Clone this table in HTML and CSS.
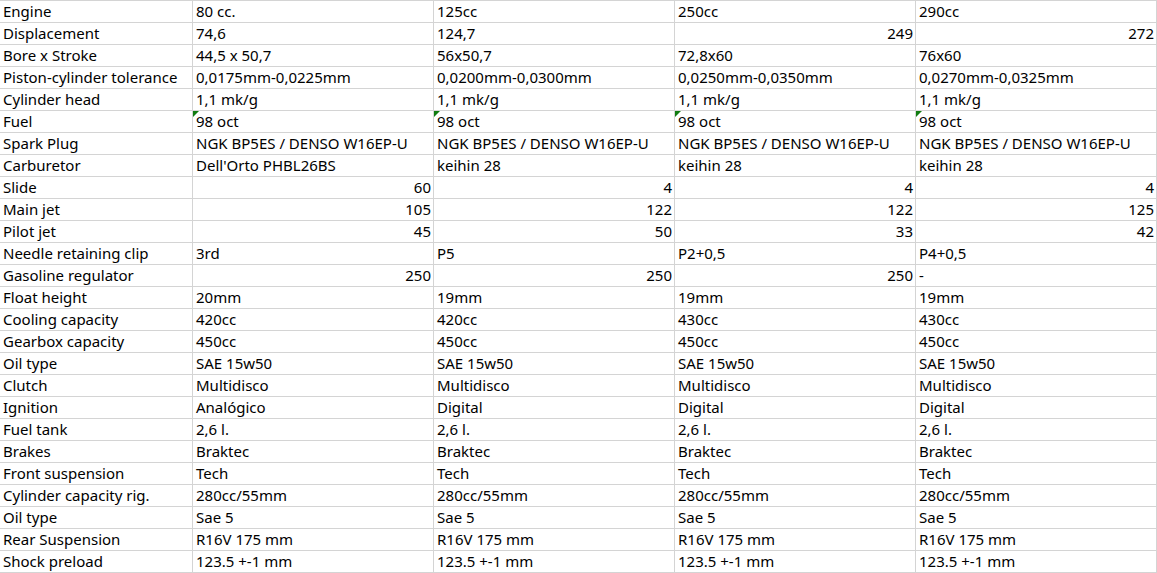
FILE: index.html
```html
<!DOCTYPE html>
<html>
<head>
<meta charset="utf-8">
<link rel="stylesheet" href="styles.css">
</head>
<body>
<table class="sheet">
<colgroup><col class="c-label"><col class="c-val"><col class="c-val"><col class="c-val"><col class="c-val"></colgroup>
<tbody>
<tr><td>Engine</td><td>80 cc.</td><td>125cc</td><td>250cc</td><td>290cc</td></tr>
<tr><td>Displacement</td><td>74,6</td><td>124,7</td><td class="num">249</td><td class="num">272</td></tr>
<tr><td>Bore x Stroke</td><td>44,5 x 50,7</td><td>56x50,7</td><td>72,8x60</td><td>76x60</td></tr>
<tr><td>Piston-cylinder tolerance</td><td>0,0175mm-0,0225mm</td><td>0,0200mm-0,0300mm</td><td>0,0250mm-0,0350mm</td><td>0,0270mm-0,0325mm</td></tr>
<tr><td>Cylinder head</td><td>1,1 mk/g</td><td>1,1 mk/g</td><td>1,1 mk/g</td><td>1,1 mk/g</td></tr>
<tr><td>Fuel</td><td class="flag">98 oct</td><td class="flag">98 oct</td><td class="flag">98 oct</td><td class="flag">98 oct</td></tr>
<tr><td>Spark Plug</td><td>NGK BP5ES / DENSO W16EP-U</td><td>NGK BP5ES / DENSO W16EP-U</td><td>NGK BP5ES / DENSO W16EP-U</td><td>NGK BP5ES / DENSO W16EP-U</td></tr>
<tr><td>Carburetor</td><td>Dell'Orto PHBL26BS</td><td>keihin 28</td><td>keihin 28</td><td>keihin 28</td></tr>
<tr><td>Slide</td><td class="num">60</td><td class="num">4</td><td class="num">4</td><td class="num">4</td></tr>
<tr><td>Main jet</td><td class="num">105</td><td class="num">122</td><td class="num">122</td><td class="num">125</td></tr>
<tr><td>Pilot jet</td><td class="num">45</td><td class="num">50</td><td class="num">33</td><td class="num">42</td></tr>
<tr><td>Needle retaining clip</td><td>3rd</td><td>P5</td><td>P2+0,5</td><td>P4+0,5</td></tr>
<tr><td>Gasoline regulator</td><td class="num">250</td><td class="num">250</td><td class="num">250</td><td>-</td></tr>
<tr><td>Float height</td><td>20mm</td><td>19mm</td><td>19mm</td><td>19mm</td></tr>
<tr><td>Cooling capacity</td><td>420cc</td><td>420cc</td><td>430cc</td><td>430cc</td></tr>
<tr><td>Gearbox capacity</td><td>450cc</td><td>450cc</td><td>450cc</td><td>450cc</td></tr>
<tr><td>Oil type</td><td>SAE 15w50</td><td>SAE 15w50</td><td>SAE 15w50</td><td>SAE 15w50</td></tr>
<tr><td>Clutch</td><td>Multidisco</td><td>Multidisco</td><td>Multidisco</td><td>Multidisco</td></tr>
<tr><td>Ignition</td><td>Analógico</td><td>Digital</td><td>Digital</td><td>Digital</td></tr>
<tr><td>Fuel tank</td><td>2,6 l.</td><td>2,6 l.</td><td>2,6 l.</td><td>2,6 l.</td></tr>
<tr><td>Brakes</td><td>Braktec</td><td>Braktec</td><td>Braktec</td><td>Braktec</td></tr>
<tr><td>Front suspension</td><td>Tech</td><td>Tech</td><td>Tech</td><td>Tech</td></tr>
<tr><td>Cylinder capacity rig.</td><td>280cc/55mm</td><td>280cc/55mm</td><td>280cc/55mm</td><td>280cc/55mm</td></tr>
<tr><td>Oil type</td><td>Sae 5</td><td>Sae 5</td><td>Sae 5</td><td>Sae 5</td></tr>
<tr><td>Rear Suspension</td><td>R16V 175 mm</td><td>R16V 175 mm</td><td>R16V 175 mm</td><td>R16V 175 mm</td></tr>
<tr><td>Shock preload</td><td>123.5 +-1 mm</td><td>123.5 +-1 mm</td><td>123.5 +-1 mm</td><td>123.5 +-1 mm</td></tr>
</tbody>
</table>
</body>
</html>
```

FILE: styles.css
```css
html, body {
  margin: 0;
  padding: 0;
  background: #ffffff;
}

.sheet {
  border-collapse: separate;
  border-spacing: 0;
  table-layout: fixed;
  width: 1157px;
  border-top: 1px solid #d4d4d4;
  font-family: "Noto Sans", "Open Sans", sans-serif;
  font-size: 15px;
  color: #000000;
}

.c-label { width: 193px; }
.c-val { width: 241px; }

.sheet td {
  height: 21px;
  padding: 0 3px;
  box-sizing: border-box;
  border-right: 1px solid #d4d4d4;
  border-bottom: 1px solid #d4d4d4;
  white-space: nowrap;
  overflow: hidden;
  line-height: 21px;
  vertical-align: bottom;
  position: relative;
}

.sheet td.num {
  text-align: right;
  padding-right: 2px;
}

.sheet td.flag::before {
  content: "";
  position: absolute;
  left: 0;
  top: 0;
  width: 0;
  height: 0;
  border-top: 6px solid #107c10;
  border-right: 6px solid transparent;
}
```
